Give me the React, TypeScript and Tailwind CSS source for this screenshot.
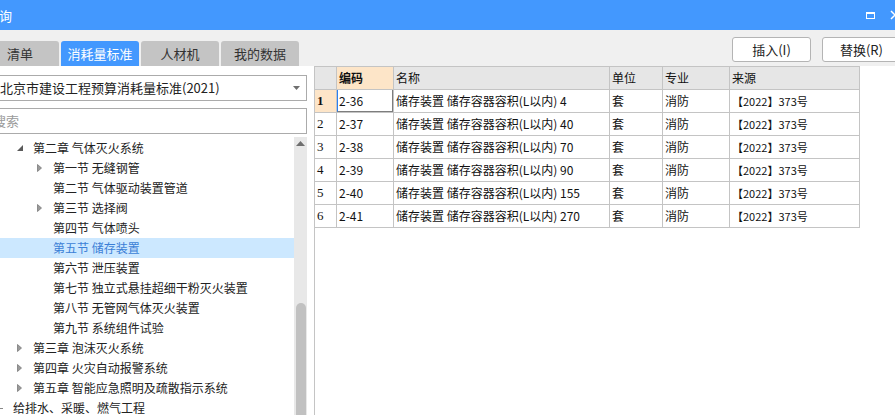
import React from "react";

const F = { fontFamily: '"Noto Sans CJK SC", "Liberation Sans", sans-serif' };

type Node = { text: string; level: number; arrow: "open" | "closed" | "none" | "dash"; selected?: boolean };

const tree: Node[] = [
  { text: "第二章 气体灭火系统", level: 1, arrow: "open" },
  { text: "第一节 无缝钢管", level: 2, arrow: "closed" },
  { text: "第二节 气体驱动装置管道", level: 2, arrow: "none" },
  { text: "第三节 选择阀", level: 2, arrow: "closed" },
  { text: "第四节 气体喷头", level: 2, arrow: "none" },
  { text: "第五节 储存装置", level: 2, arrow: "none", selected: true },
  { text: "第六节 泄压装置", level: 2, arrow: "none" },
  { text: "第七节 独立式悬挂超细干粉灭火装置", level: 2, arrow: "none" },
  { text: "第八节 无管网气体灭火装置", level: 2, arrow: "none" },
  { text: "第九节 系统组件试验", level: 2, arrow: "none" },
  { text: "第三章 泡沫灭火系统", level: 1, arrow: "closed" },
  { text: "第四章 火灾自动报警系统", level: 1, arrow: "closed" },
  { text: "第五章 智能应急照明及疏散指示系统", level: 1, arrow: "closed" },
  { text: "给排水、采暖、燃气工程", level: 0, arrow: "dash" },
];

const rows = [
  ["2-36", "4"],
  ["2-37", "40"],
  ["2-38", "70"],
  ["2-39", "90"],
  ["2-40", "155"],
  ["2-41", "270"],
];

function Closed() {
  return (
    <svg width="5" height="8" viewBox="0 0 5 8">
      <path d="M0.5 0.5 L4.5 4 L0.5 7.5 Z" fill="#9a9a9a" stroke="#7a7a7a" strokeWidth="0.8" />
    </svg>
  );
}
function Open() {
  return (
    <svg width="6" height="6" viewBox="0 0 6 6">
      <path d="M6 0 L6 6 L0 6 Z" fill="#5a5a5a" />
    </svg>
  );
}

function TreeRow({ n }: { n: Node }) {
  const arrowLeft = n.level === 1 ? "pl-[17px]" : n.level === 2 ? "pl-[37px]" : "pl-0";
  return (
    <div className={`h-[20px] flex items-center ${n.selected ? "bg-[#cce8ff] text-[#3b7fd6]" : "text-[#222]"} ${arrowLeft}`}>
      {n.arrow === "dash" ? (
        <div className="w-[13px] flex items-center">
          <div className="w-[3px] h-px bg-[#888]" />
        </div>
      ) : (
        <div className="w-[16px] flex items-center">
          {n.arrow === "open" && <Open />}
          {n.arrow === "closed" && <Closed />}
        </div>
      )}
      <span className="text-[12px] leading-none whitespace-nowrap">{n.text}</span>
    </div>
  );
}

const cell = "border-r border-b border-[#c4c4c4] h-full flex items-center pl-[2px] whitespace-nowrap overflow-hidden";
const gridCols = "grid grid-cols-[22px_57px_216px_53px_67px_130px]";

export default function App() {
  return (
    <div className="w-[895px] h-[415px] overflow-hidden bg-[#f0f0f0] flex flex-col" style={F}>
      {/* title bar */}
      <div className="h-[30px] shrink-0 bg-[#4398fe] flex items-center justify-between text-white">
        <span className="text-[13px] leading-none -ml-[1px]">询</span>
        <div className="flex items-center gap-[15px] -mr-[5px]">
          <div className="w-[9px] h-[7px] border border-white border-t-2" />
          <svg width="10" height="10" viewBox="0 0 10 10">
            <path d="M1 1 L9 9 M9 1 L1 9" stroke="white" strokeWidth="1.5" />
          </svg>
        </div>
      </div>
      {/* toolbar */}
      <div className="h-[36px] shrink-0 flex justify-between">
        <div className="flex items-end gap-[2px] -ml-[19px]">
          {["清单", "消耗量标准", "人材机", "我的数据"].map((t) => (
            <div
              key={t}
              className={`w-[78px] h-[25px] rounded-t-[3px] flex items-center justify-center text-[13px] ${
                t === "消耗量标准" ? "bg-[#4398fe] text-white" : "bg-[#c4c4c4] text-[#333]"
              }`}
            >
              {t}
            </div>
          ))}
        </div>
        <div className="flex items-start gap-[11px] pt-[7px] -mr-[6px]">
          {["插入(I)", "替换(R)"].map((t) => (
            <div
              key={t}
              className="w-[79px] h-[25px] bg-white border border-[#b4b4b4] rounded-[3px] flex items-center justify-center text-[13px] text-[#222]"
            >
              {t}
            </div>
          ))}
        </div>
      </div>
      {/* main */}
      <div className="flex-1 flex min-h-0">
        {/* left panel */}
        <div className="w-[314px] shrink-0 bg-white flex flex-col pt-[9px] min-h-0">
          <div className="h-[26px] w-[311px] -ml-[4px] border border-[#ababab] flex items-center justify-between pr-[6px]">
            <span className="text-[13px] text-[#222] whitespace-nowrap pl-[3px]">北京市建设工程预算消耗量标准(2021)</span>
            <svg width="7" height="4" viewBox="0 0 7 4">
              <path d="M0 0 L7 0 L3.5 4 Z" fill="#6f6f6f" />
            </svg>
          </div>
          <div className="h-[26px] w-[311px] -ml-[4px] mt-[7px] border border-[#ababab] flex items-center">
            <span className="text-[13px] text-[#9a9a9a] whitespace-nowrap -ml-[4px]">搜索</span>
          </div>
          <div className="flex-1 flex mt-[3px] min-h-0 w-[307px]">
            <div className="flex-1 pt-[1px] overflow-hidden">
              {tree.map((n) => (
                <TreeRow key={n.text} n={n} />
              ))}
            </div>
            <div className="w-[13px] bg-[#e8e8e8] flex flex-col items-center">
              <svg width="9" height="5" viewBox="0 0 9 5" className="mt-[4px]">
                <path d="M0 5 L4.5 0 L9 5 Z" fill="#6f6f6f" />
              </svg>
              <div className="w-[10px] flex-1 mt-[157px] bg-[#c1c1c1] rounded-t-[5px]" />
            </div>
          </div>
        </div>
        {/* right panel */}
        <div className="flex-1 bg-white border-l border-[#c4c4c4] flex flex-col">
          <div className={`${gridCols} h-[24px] w-[545px] text-[12px] text-[#111]`}>
            <div className={`${cell} bg-[#e6e6e6] border-t border-t-[#c4c4c4]`} />
            <div className={`${cell} bg-[#fde5c8] font-bold border-t border-t-[#c4c4c4]`}>编码</div>
            <div className={`${cell} bg-[#e6e6e6] border-t border-t-[#c4c4c4]`}>名称</div>
            <div className={`${cell} bg-[#e6e6e6] border-t border-t-[#c4c4c4]`}>单位</div>
            <div className={`${cell} bg-[#e6e6e6] border-t border-t-[#c4c4c4]`}>专业</div>
            <div className={`${cell} bg-[#e6e6e6] border-t border-t-[#c4c4c4]`}>来源</div>
          </div>
          {rows.map(([code, vol], i) => (
            <div key={code} className={`${gridCols} h-[23px] w-[545px] text-[12px] text-[#111]`}>
              <div
                className={`${cell} ${i === 0 ? "bg-[#fde5c8] font-bold" : ""}`}
                style={{ fontFamily: '"Liberation Serif", serif', fontSize: 13 }}
              >
                {i + 1}
              </div>
              <div className={`${cell} relative`}>
                {code}
                {i === 0 && (
                  <div className="absolute -left-[1px] top-0 -right-[1px] -bottom-[1px] border-l-2 border-l-[#2b7ff0] border-r-2 border-r-[#7d7d7d] border-b-2 border-b-[#7d7d7d]" />
                )}
              </div>
              <div className={`${cell} pl-[2px]`}>储存装置 储存容器容积(L以内) {vol}</div>
              <div className={cell}>套</div>
              <div className={cell}>消防</div>
              <div className={`${cell} text-[11px]`}>【2022】373号</div>
            </div>
          ))}
        </div>
      </div>
    </div>
  );
}
